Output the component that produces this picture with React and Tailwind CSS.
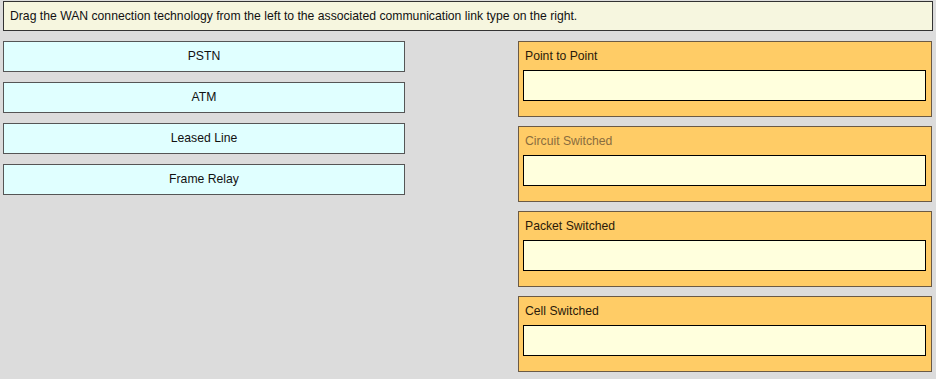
import React from 'react';

const techs = ["PSTN", "ATM", "Leased Line", "Frame Relay"];
const links = ["Point to Point", "Circuit Switched", "Packet Switched", "Cell Switched"];

const App = () => {
  return (
    <div
      className="w-[936px] h-[379px] bg-[#dcdcdc] pl-[3px] pt-[1px] overflow-hidden text-[12.2px] text-[#111]"
      style={{ fontFamily: '"Liberation Sans", Arial, sans-serif' }}
    >
      {/* Instructions */}
      <div className="w-[930px] h-[30px] bg-[#f6f6df] border border-[#333] flex items-center pl-[6px]">
        Drag the WAN connection technology from the left to the associated communication link type on the right.
      </div>

      <div className="flex mt-[10px]">
        {/* Draggable items */}
        <div className="w-[402px] flex flex-col gap-[10px]">
          {techs.map((t) => (
            <div
              key={t}
              className="h-[31px] bg-[#e0ffff] border border-[#555] flex items-center justify-center"
            >
              {t}
            </div>
          ))}
        </div>

        {/* Drop targets */}
        <div className="ml-[113px] w-[414px] flex flex-col gap-[9px]">
          {links.map((l) => (
            <div
              key={l}
              className="h-[76px] bg-[#ffcc66] border border-[#6b5a45] pl-[4px] pr-[5px] pt-[7px]"
            >
              <div
                className={
                  "pl-[2px] h-[14px] leading-[14px] " +
                  (l === "Circuit Switched" ? "text-[#8a6d3e]" : "text-[#2a1a0a]")
                }
              >
                {l}
              </div>
              <div className="mt-[7px] h-[31px] bg-[#ffffdd] border border-black"></div>
            </div>
          ))}
        </div>
      </div>
    </div>
  );
};

export default App;
